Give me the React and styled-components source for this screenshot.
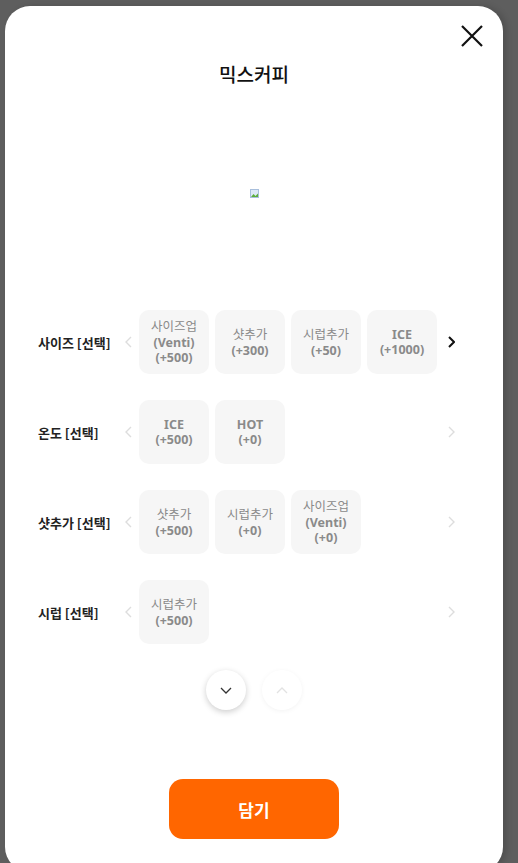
import React from "react";
import styled, { createGlobalStyle } from "styled-components";

const GlobalStyle = createGlobalStyle`
  html, body {
    margin: 0;
    padding: 0;
    background: #5e5e5e;
    overflow: hidden;
  }
  body {
    font-family: "Noto Sans", "Noto Sans CJK KR", sans-serif;
  }
`;

const groups = [
  {
    label: "사이즈 [선택]",
    more: true,
    options: [
      ["사이즈업 (Venti)", 500],
      ["샷추가", 300],
      ["시럽추가", 50],
      ["ICE", 1000],
    ],
  },
  {
    label: "온도 [선택]",
    options: [
      ["ICE", 500],
      ["HOT", 0],
    ],
  },
  {
    label: "샷추가 [선택]",
    options: [
      ["샷추가", 500],
      ["시럽추가", 0],
      ["사이즈업 (Venti)", 0],
    ],
  },
  { label: "시럽 [선택]", options: [["시럽추가", 500]] },
];

// hangul runs are drawn lighter than latin text inside option chips
function splitHangul(text) {
  return text.split(/([가-힣]+)/).map((part, i) =>
    /[가-힣]/.test(part) ? <Hangul key={i}>{part}</Hangul> : part
  );
}

function Chevron({ dir = "right", color = "#ddd", width = 1.4 }) {
  const points = dir === "left" ? "6,1 1,6 6,11" : "1,1 6,6 1,11";
  return (
    <svg width="7" height="12" viewBox="0 0 7 12">
      <polyline points={points} fill="none" stroke={color} strokeWidth={width} />
    </svg>
  );
}

export default function App() {
  return (
    <>
      <GlobalStyle />
      <Modal>
        <CloseButton aria-label="close">
          <svg width="24" height="24" viewBox="0 0 24 24">
            <path d="M2 2 L22 22 M22 2 L2 22" stroke="#111" strokeWidth="2.2" />
          </svg>
        </CloseButton>
        <Title>믹스커피</Title>
        <ImageBox>
          <svg width="9" height="9" viewBox="0 0 9 9">
            <rect x="0.5" y="0.5" width="8" height="8" fill="#dce8f6" stroke="#a9bfdc" />
            <path d="M1 8 L3.5 5 L5.5 7 L8 4.5 L8 8 Z" fill="#5cae3c" />
          </svg>
        </ImageBox>
        <Groups>
          {groups.map((g) => (
            <Row key={g.label}>
              <Label>{g.label}</Label>
              <Arrow>
                <Chevron dir="left" />
              </Arrow>
              <Options>
                {g.options.map(([name, price]) => (
                  <Option key={name}>
                    <div>{splitHangul(name)}</div>
                    <div>(+{price})</div>
                  </Option>
                ))}
              </Options>
              <Arrow>
                {g.more ? (
                  <Chevron dir="right" color="#111" width={2} />
                ) : (
                  <Chevron dir="right" />
                )}
              </Arrow>
            </Row>
          ))}
        </Groups>
        <ScrollButtons>
          <Round active>
            <svg width="12" height="7" viewBox="0 0 12 7">
              <polyline points="1,1 6,6 11,1" fill="none" stroke="#333" strokeWidth="1.3" />
            </svg>
          </Round>
          <Round>
            <svg width="12" height="7" viewBox="0 0 12 7">
              <polyline points="1,6 6,1 11,6" fill="none" stroke="#e2e2e2" strokeWidth="1.3" />
            </svg>
          </Round>
        </ScrollButtons>
        <CartButton>담기</CartButton>
      </Modal>
    </>
  );
}

const Modal = styled.div`
  position: relative;
  box-sizing: border-box;
  margin: 6px 0 0 5px;
  width: 498px;
  height: 866px;
  background: #fff;
  border-radius: 25px;
  box-shadow: 4px 0 6px rgba(0, 0, 0, 0.15);
  display: flex;
  flex-direction: column;
  align-items: center;
`;

const CloseButton = styled.button`
  position: absolute;
  top: 18px;
  right: 19px;
  width: 24px;
  height: 24px;
  padding: 0;
  border: none;
  background: none;
  display: flex;
`;

const Title = styled.h2`
  margin: 54px 0 0;
  font-family: "Noto Sans CJK KR", sans-serif;
  font-size: 19px;
  line-height: 28px;
  font-weight: 500;
  color: #111;
`;

const ImageBox = styled.div`
  box-sizing: border-box;
  height: 222px;
  padding-bottom: 12px;
  display: flex;
  align-items: center;
  justify-content: center;
`;

const Groups = styled.div`
  align-self: stretch;
  padding-left: 33px;
  display: flex;
  flex-direction: column;
  gap: 26px;
`;

const Row = styled.div`
  display: grid;
  grid-template-columns: 80px 21px 302px 20px;
  align-items: center;
  height: 64px;
`;

const Label = styled.div`
  font-family: "Noto Sans CJK KR", sans-serif;
  font-size: 13px;
  font-weight: 700;
  color: #222;
  white-space: nowrap;
`;

const Arrow = styled.div`
  display: flex;
  justify-content: center;
  align-items: center;
`;

const Options = styled.div`
  display: flex;
  gap: 6px;
`;

const Option = styled.div`
  box-sizing: border-box;
  width: 70px;
  height: 64px;
  padding: 0 7px;
  border-radius: 10px;
  background: #f6f6f6;
  display: flex;
  flex-direction: column;
  align-items: center;
  justify-content: center;
  text-align: center;
  word-break: keep-all;
  font-family: "Noto Sans", "Noto Sans CJK KR", sans-serif;
  font-size: 12.5px;
  line-height: 15.5px;
  font-weight: 700;
  color: #8a8a8a;
`;

const Hangul = styled.span`
  font-family: "Noto Sans CJK KR", sans-serif;
  font-weight: 400;
`;

const ScrollButtons = styled.div`
  margin-top: 26px;
  display: flex;
  gap: 16px;
`;

const Round = styled.div`
  width: 40px;
  height: 40px;
  border-radius: 50%;
  background: #fff;
  display: flex;
  align-items: center;
  justify-content: center;
  box-shadow: ${(p) =>
    p.active ? "0 2px 6px rgba(0, 0, 0, 0.2)" : "0 1px 5px rgba(0, 0, 0, 0.05)"};
`;

const CartButton = styled.button`
  margin-top: 69px;
  width: 170px;
  height: 60px;
  border: none;
  border-radius: 14px;
  background: #ff6600;
  color: #fff;
  font-family: "Noto Sans CJK KR", sans-serif;
  font-size: 17px;
  font-weight: 700;
`;
